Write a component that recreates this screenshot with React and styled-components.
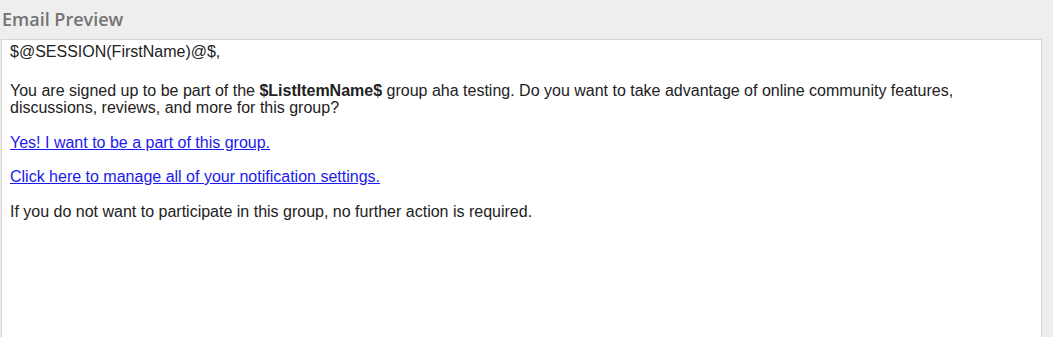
import React from "react";
import styled, { createGlobalStyle } from "styled-components";

const Global = createGlobalStyle`
  html, body { margin: 0; padding: 0; background: #eeeeee; }
  body { overflow: hidden; }
`;

const Page = styled.div`
  width: 1053px;
  height: 337px;
  background: #eeeeee;
  padding: 0 11px 0 1px;
  box-sizing: border-box;
  display: flex;
  flex-direction: column;
`;

const Title = styled.h2`
  margin: 0;
  height: 39px;
  padding: 8px 0 0 1px;
  box-sizing: border-box;
  font-family: "Open Sans", sans-serif;
  font-weight: 600;
  font-size: 18px;
  line-height: 22px;
  color: #747474;
`;

const Preview = styled.div`
  flex: 1;
  background: #ffffff;
  border: 1px solid #d6d6d6;
  border-bottom: none;
  padding: 3px 8px 0 8px;
  font-family: "Liberation Sans", Arial, sans-serif;
  font-size: 16px;
  line-height: 17px;
  color: #222222;
`;

const Para = styled.p`
  margin: 0 0 ${(p) => p.$gap || 18}px 0;
`;

const Link = styled.a`
  color: #1a1aee;
  text-decoration: underline;
`;

export default function App() {
  return (
    <>
      <Global />
      <Page>
        <Title>Email Preview</Title>
        <Preview>
          <Para $gap={22}>$@SESSION(FirstName)@$,</Para>
          <Para $gap={18}>
            You are signed up to be part of the <b>$ListItemName$</b> group aha testing. Do you want to take advantage of online community features, discussions, reviews, and more for this group?
          </Para>
          <Para $gap={17}>
            <Link href="#">Yes! I want to be a part of this group.</Link>
          </Para>
          <Para $gap={18}>
            <Link href="#">Click here to manage all of your notification settings.</Link>
          </Para>
          <Para>If you do not want to participate in this group, no further action is required.</Para>
        </Preview>
      </Page>
    </>
  );
}
